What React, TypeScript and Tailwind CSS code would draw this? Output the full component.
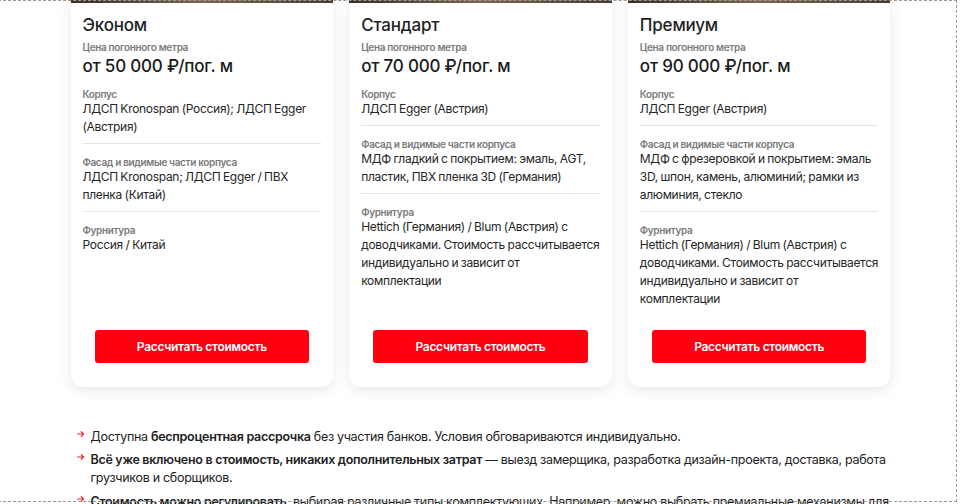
import React from 'react';

type Section = { label: string; value: string };

interface Plan {
  title: string;
  price: string;
  sections: Section[];
}

// line breaks follow the original layout
const fittings =
  'Hettich (Германия) / Blum (Австрия) с\nдоводчиками. Стоимость рассчитывается\nиндивидуально и зависит от\nкомплектации';

const plans: Plan[] = [
  {
    title: 'Эконом',
    price: 'от 50 000 ₽/пог. м',
    sections: [
      { label: 'Корпус', value: 'ЛДСП Kronospan (Россия); ЛДСП Egger\n(Австрия)' },
      { label: 'Фасад и видимые части корпуса', value: 'ЛДСП Kronospan; ЛДСП Egger / ПВХ\nпленка (Китай)' },
      { label: 'Фурнитура', value: 'Россия / Китай' },
    ],
  },
  {
    title: 'Стандарт',
    price: 'от 70 000 ₽/пог. м',
    sections: [
      { label: 'Корпус', value: 'ЛДСП Egger (Австрия)' },
      { label: 'Фасад и видимые части корпуса', value: 'МДФ гладкий с покрытием: эмаль, AGT,\nпластик, ПВХ пленка 3D (Германия)' },
      { label: 'Фурнитура', value: fittings },
    ],
  },
  {
    title: 'Премиум',
    price: 'от 90 000 ₽/пог. м',
    sections: [
      { label: 'Корпус', value: 'ЛДСП Egger (Австрия)' },
      {
        label: 'Фасад и видимые части корпуса',
        value: 'МДФ с фрезеровкой и покрытием: эмаль\n3D, шпон, камень, алюминий; рамки из\nалюминия, стекло',
      },
      { label: 'Фурнитура', value: fittings },
    ],
  },
];

function PlanCard({ plan }: { plan: Plan }) {
  return (
    <div className="flex flex-col rounded-b-xl bg-white shadow-[0_4px_14px_rgba(0,0,0,0.09)] overflow-hidden">
      {/* photo strip, the rest of the picture is above the viewport */}
      <div className="h-[3px] bg-gradient-to-r from-[#3b2f26] via-[#7b6550] to-[#4a3a2e]" />

      <div className="px-3 pt-[10px]">
        <h3 className="text-[17px] leading-6 font-medium tracking-[-0.2px] text-[#1f1f1f]">{plan.title}</h3>
        <div className="mt-1 text-[10px] leading-3 font-semibold tracking-[-0.35px] text-[#7a7a7a]">Цена погонного метра</div>
        <div className="text-[17px] leading-6 font-medium tracking-[-0.2px] text-[#1a1a1a] mt-[1px]">{plan.price}</div>

        {plan.sections.map((s, i) => (
          <div
            key={s.label}
            className={
              i < plan.sections.length - 1
                ? 'pb-[7px] border-b border-[#e4e4e4] ' + (i === 0 ? 'pt-[10px]' : 'pt-3')
                : 'pt-3'
            }
          >
            <div className="text-[10px] leading-3 font-semibold tracking-[-0.35px] text-[#7a7a7a]">{s.label}</div>
            <p className="-mr-[8px] whitespace-pre-line text-[12px] leading-[18px] tracking-[-0.3px] [word-spacing:-0.5px] text-[#262626]">
              {s.value}
            </p>
          </div>
        ))}
      </div>

      <div className="mt-auto px-6 pt-[22px] pb-6">
        <button className="w-full h-[33px] rounded-[3px] bg-[#ff0010] text-white text-[12px] font-semibold tracking-[-0.3px]">
          Рассчитать стоимость
        </button>
      </div>
    </div>
  );
}

function Arrow() {
  return (
    <svg width="8" height="8" viewBox="0 0 8 8" className="shrink-0 mt-[2px]" fill="none">
      <path d="M0.5 4h6M4.2 1.6 6.6 4 4.2 6.4" stroke="#f0212b" strokeWidth="1.1" strokeLinecap="round" strokeLinejoin="round" />
    </svg>
  );
}

export default function App() {
  return (
    <div className="relative h-[504px] overflow-hidden bg-white" style={{ fontFamily: 'Inter, "Noto Sans", sans-serif' }}>
      <div className="mx-auto w-[821px] pl-[1px]">
        <div className="grid grid-cols-3 gap-[16px]">
          {plans.map((p) => (
            <PlanCard key={p.title} plan={p} />
          ))}
        </div>

        <ul className="mt-[41px] pl-[6px] flex flex-col gap-[5px] text-[12.5px] leading-[18px] tracking-[-0.3px] text-[#222]">
          <li className="flex gap-[6px]">
            <Arrow />
            <span>
              Доступна <b className="font-semibold">беспроцентная рассрочка</b> без участия банков. Условия обговариваются
              индивидуально.
            </span>
          </li>
          <li className="flex gap-[6px]">
            <Arrow />
            <span>
              <b className="font-semibold">Всё уже включено в стоимость, никаких дополнительных затрат</b> — выезд замерщика,
              разработка дизайн-проекта, доставка, работа грузчиков и сборщиков.
            </span>
          </li>
          <li className="flex gap-[6px] mt-[1px]">
            <Arrow />
            <span>
              <b className="font-semibold">Стоимость можно регулировать</b>, выбирая различные типы комплектующих. Например, можно
              выбрать премиальные механизмы для выдвижных ящиков и более доступные материалы корпуса.
            </span>
          </li>
        </ul>
      </div>

      {/* dashed selection frame lying over the page */}
      <div className="pointer-events-none absolute left-[-2px] top-0 right-[3px] h-[502px] border-t border-r border-b border-dashed border-[#9a9a9a]" />
    </div>
  );
}
